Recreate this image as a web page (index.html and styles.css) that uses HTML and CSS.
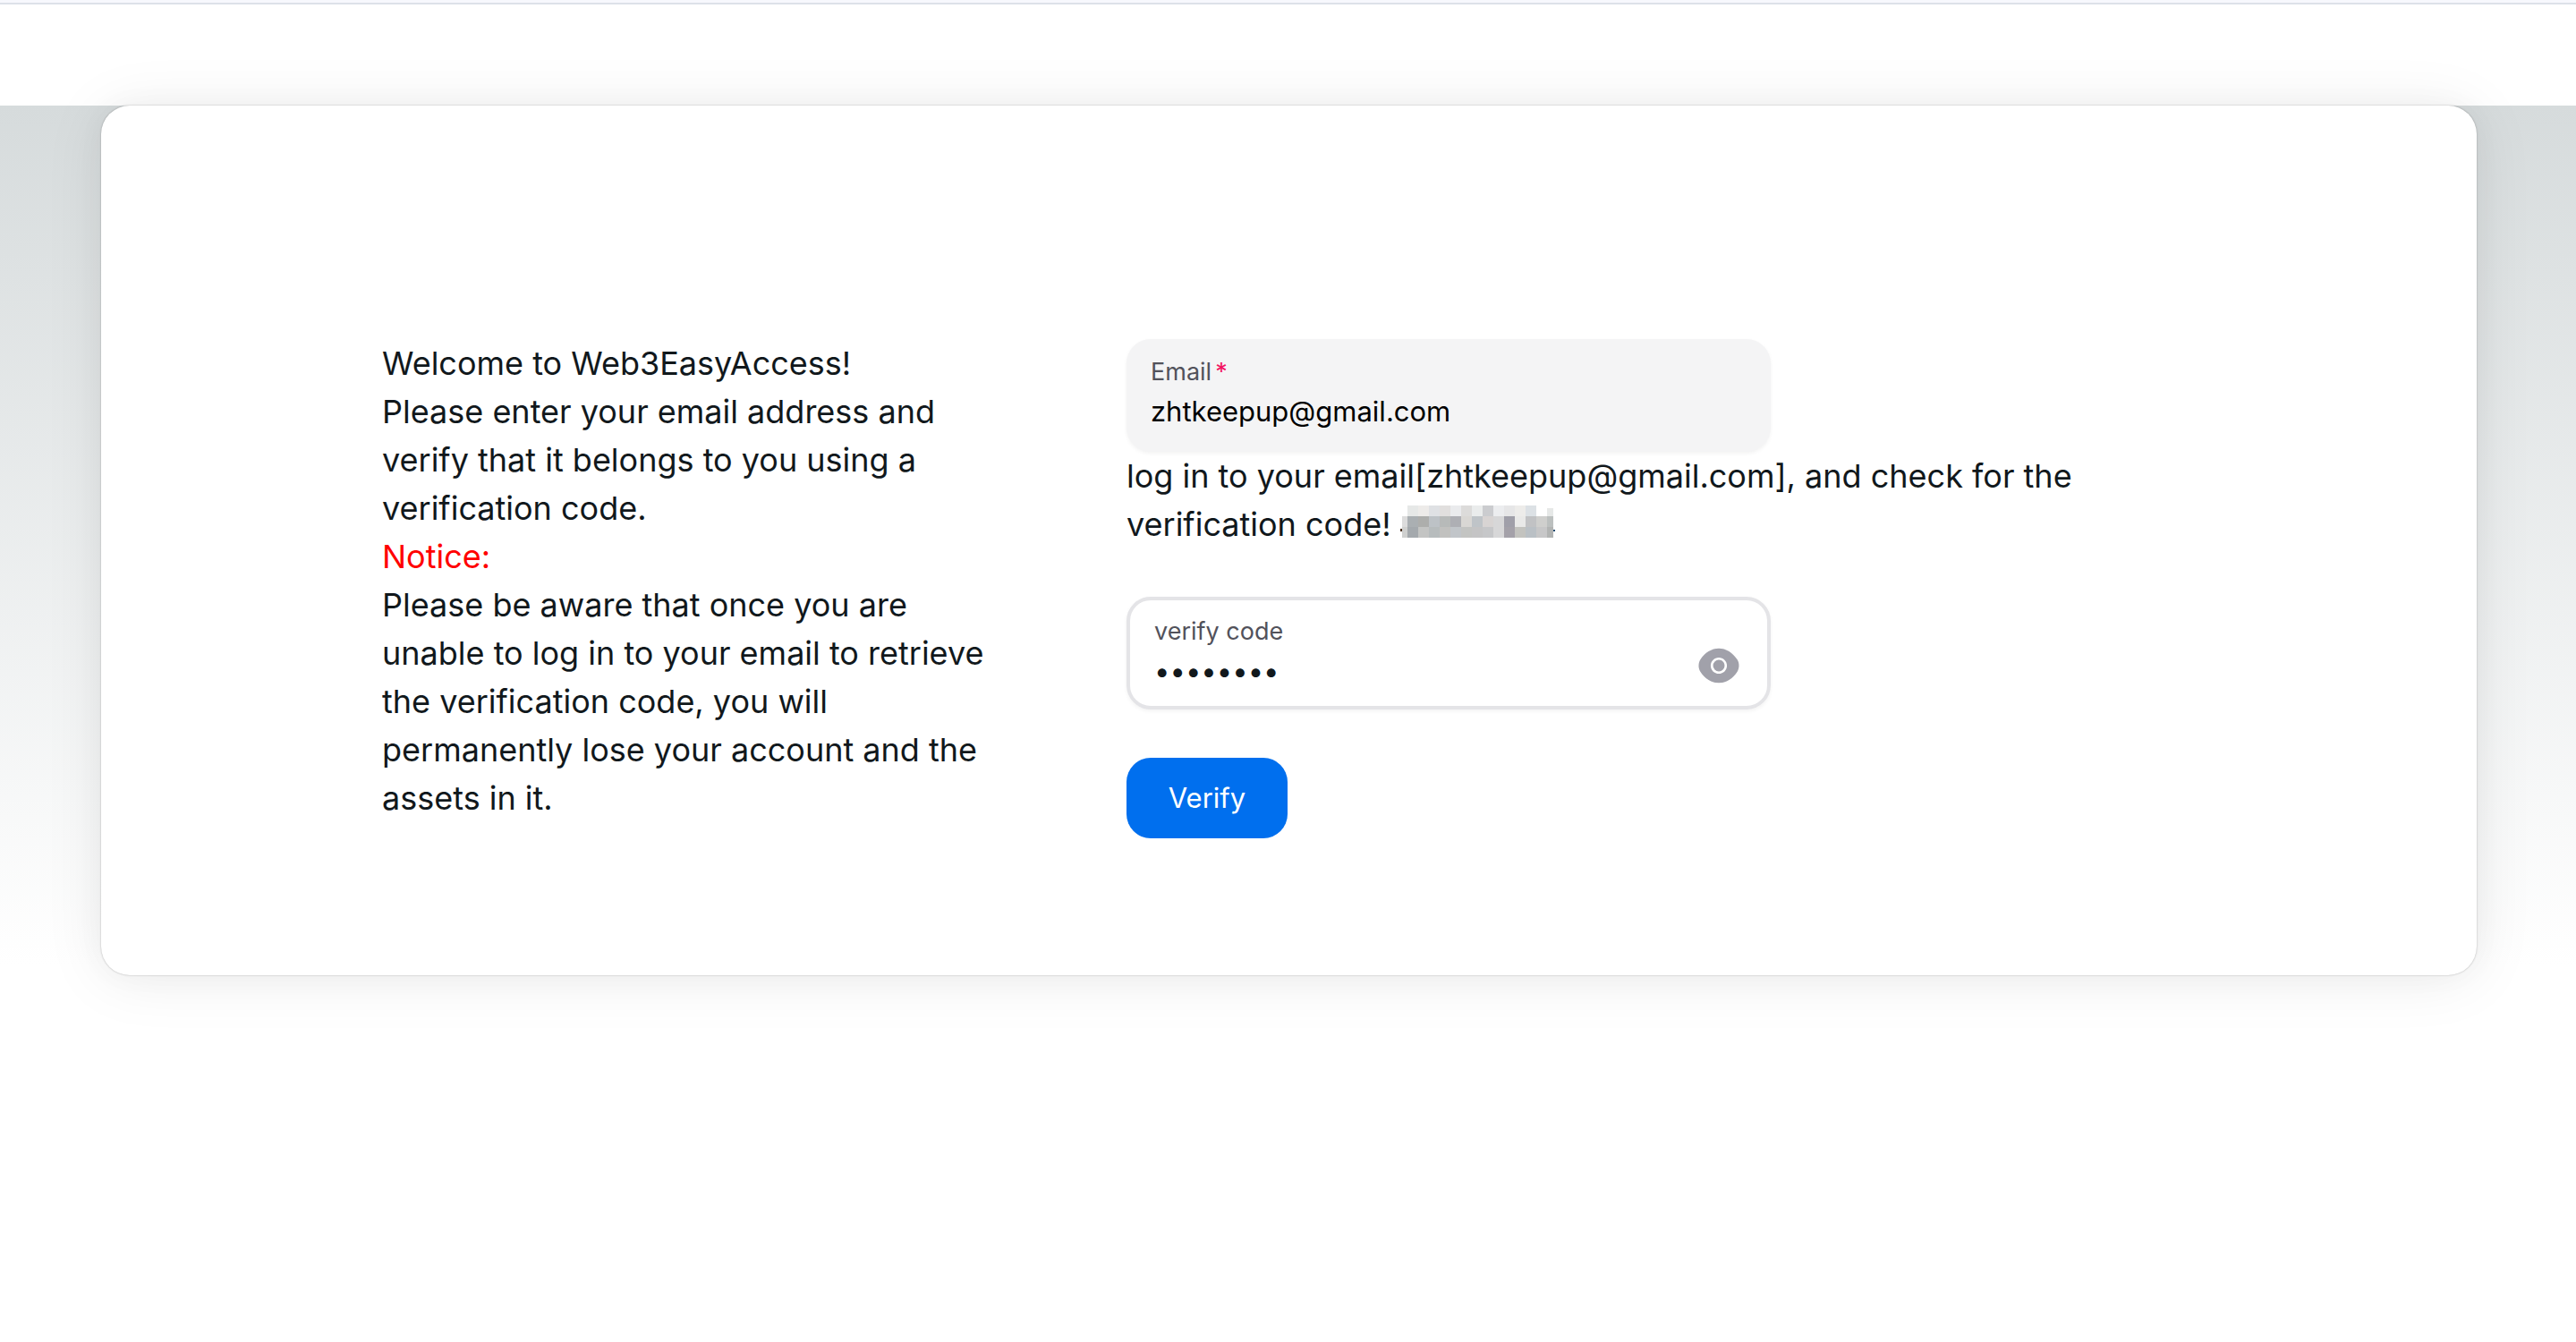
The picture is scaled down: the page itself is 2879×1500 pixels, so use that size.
FILE: index.html
```html
<!DOCTYPE html>
<html lang="en">
<head>
<meta charset="utf-8">
<meta name="viewport" content="width=device-width, initial-scale=1">
<title>Web3EasyAccess</title>
<link rel="stylesheet" href="styles.css">
</head>
<body>
<header class="topbar"></header>
<main class="page">
  <section class="card">
    <div class="intro">
      <p>Welcome to Web3EasyAccess!</p>
      <p>Please enter your email address and verify that it belongs to you using a verification code.</p>
      <p class="notice">Notice:</p>
      <p>Please be aware that once you are unable to log in to your email to retrieve the verification code, you will permanently lose your account and the assets in it.</p>
    </div>
    <form class="form">
      <div class="field field-flat">
        <div class="field-main">
          <label class="label" for="email">Email<span class="required">*</span></label>
          <input class="input input-email" id="email" type="email" value="zhtkeepup@gmail.com" required>
        </div>
      </div>
      <p class="hint">log in to your email[zhtkeepup@gmail.com], and check for the verification code!
        <svg class="masked" viewBox="0 0 173 36" role="img" aria-label="Hidden code" shape-rendering="crispEdges">
          <path fill="#4a3222" d="M0 26h2v3H0z"/><path fill="#1d4a70" d="M171 27h2v2h-2z"/>
          <path fill="#e6e8e7" d="M8 0h12v12H8z"/><path fill="#edebe9" d="M20 0h12v12H20z"/><path fill="#dfe1e4" d="M32 0h12v12H32z"/><path fill="#e1dfde" d="M44 0h12v12H44z"/><path fill="#eaebed" d="M56 0h12v12H56z"/><path fill="#dcdbda" d="M68 0h12v12H68z"/><path fill="#eaecec" d="M80 0h12v12H80z"/><path fill="#cbcccf" d="M92 0h12v12H92z"/><path fill="#ecedef" d="M104 0h12v12h-12z"/><path fill="#e6e6e7" d="M116 0h12v12h-12z"/><path fill="#edecea" d="M128 0h12v12h-12z"/><path fill="#dce1e5" d="M140 0h12v12h-12z"/><path fill="#e6e8e7" d="M164 3h7v9h-7z"/>
          <path fill="#dcdcdc" d="M2 12h6v12H2z"/><path fill="#aaafb2" d="M8 12h12v12H8z"/><path fill="#adaeac" d="M20 12h12v12H20z"/><path fill="#bdc2c6" d="M32 12h12v12H32z"/><path fill="#b7bab9" d="M44 12h12v12H44z"/><path fill="#aeafb4" d="M56 12h12v12H56z"/><path fill="#d9d7d4" d="M68 12h12v12H68z"/><path fill="#bfc4c8" d="M80 12h12v12H80z"/><path fill="#d8d4d3" d="M92 12h12v12H92z"/><path fill="#d7d7d8" d="M104 12h12v24h-12z"/><path fill="#a09fa9" d="M116 12h12v12h-12z"/><path fill="#e9e9e8" d="M128 12h12v12h-12z"/><path fill="#c1c2c4" d="M140 12h12v12h-12z"/><path fill="#cfcfcd" d="M152 12h12v12h-12z"/><path fill="#bcc0bf" d="M164 12h7v12h-7z"/>
          <path fill="#cfd0cf" d="M2 24h6v12H2z"/><path fill="#a4a9ad" d="M8 24h12v12H8z"/><path fill="#c3c4c3" d="M20 24h12v12H20z"/><path fill="#b7bcbd" d="M32 24h12v12H32z"/><path fill="#c1c1bf" d="M44 24h12v12H44z"/><path fill="#c1c5c9" d="M56 24h12v12H56z"/><path fill="#c3c4c2" d="M68 24h12v12H68z"/><path fill="#c4c4c5" d="M80 24h12v12H80z"/><path fill="#c6c7c9" d="M92 24h12v12H92z"/><path fill="#a4a1a9" d="M116 24h12v12h-12z"/><path fill="#c3c3bf" d="M128 24h12v12h-12z"/><path fill="#bac0c5" d="M140 24h12v12h-12z"/><path fill="#c7c7c8" d="M152 24h12v12h-12z"/><path fill="#b2b4b3" d="M164 24h7v12h-7z"/>
        </svg>
      </p>
      <div class="field field-bordered">
        <div class="field-main">
          <label class="label" for="code">verify code</label>
          <input class="input" id="code" type="password" value="12345678">
        </div>
        <button class="reveal" type="button" aria-label="Show code">
          <svg viewBox="0 0 24 24" fill="currentColor" aria-hidden="true">
            <path d="M21.25 9.15C18.94 5.52 15.56 3.43 12 3.43c-1.78 0-3.51.52-5.09 1.49-1.58.98-3 2.41-4.16 4.23-1 1.57-1 4.12 0 5.69 2.31 3.64 5.69 5.72 9.25 5.72 1.78 0 3.51-.52 5.09-1.49 1.58-.98 3-2.41 4.16-4.23 1-1.56 1-4.12 0-5.69ZM12 16.04c-2.24 0-4.04-1.81-4.04-4.04S9.76 7.96 12 7.96s4.04 1.81 4.04 4.04-1.8 4.04-4.04 4.04Z"/>
            <path d="M12 9.14a2.855 2.855 0 0 0 0 5.71c1.57 0 2.86-1.28 2.86-2.85S13.57 9.14 12 9.14Z"/>
          </svg>
        </button>
      </div>
      <button class="submit" type="button">Verify</button>
    </form>
  </section>
</main>
</body>
</html>
```
FILE: styles.css
```css
* {
  box-sizing: border-box;
}

body {
  margin: 0;
  background: #fff;
  color: #11181c;
  font-family: Inter, "Liberation Sans", sans-serif;
  font-size: 36px;
  font-weight: 380;
  font-optical-sizing: none;
  line-height: 54px;
}

p {
  margin: 0;
}

.topbar {
  height: 118px;
  border-top: 3px solid #f7f8fd;
  box-shadow: inset 0 2px #dde1e9;
}

.page {
  padding: 0 111px 120px 113px;
  background: linear-gradient(#d6dbdc, #fff 960px);
}

.card {
  display: grid;
  grid-template-columns: minmax(0, 700px) minmax(0, 1100px);
  column-gap: 132px;
  padding: 261px 314px 153px;
  background: #fff;
  border-radius: 32px;
  box-shadow: 0 0 34px rgb(0 0 0 / 3%), 0 4px 68px rgb(0 0 0 / 8%), 0 0 2px rgb(0 0 0 / 30%);
}

.notice {
  color: #f00;
}

.form {
  display: flex;
  flex-direction: column;
  align-items: flex-start;
}

.field {
  display: flex;
  align-items: flex-end;
  width: 100%;
  max-width: 720px;
  height: 126px;
  padding: 18px 27px;
  border-radius: 27px;
  box-shadow: 0 2px 4px rgb(0 0 0 / 5%);
}

.field-flat {
  padding-top: 20px;
  background: #f4f4f5;
}

.field-bordered {
  margin: 54px 0;
  border: 4px solid #e4e4e7;
}

.field-main {
  display: flex;
  flex: 1;
  flex-direction: column;
  align-self: flex-start;
  min-width: 0;
}

.label {
  color: #52525b;
  font-size: 27px;
  line-height: 34px;
}

.required {
  margin-left: 4px;
  color: #f31260;
}

.input {
  width: 100%;
  height: 54px;
  padding: 0;
  border: 0;
  outline: 0;
  background: none;
  color: #11181c;
  font: inherit;
  font-size: 31px;
}

.input-email {
  color: #000;
}

.masked {
  width: 173px;
  height: 36px;
  vertical-align: -2px;
}

.reveal {
  width: 54px;
  height: 54px;
  padding: 0;
  border: 0;
  background: none;
  color: #a1a1aa;
}

.reveal svg {
  display: block;
}

.submit {
  width: 180px;
  height: 90px;
  padding: 0;
  border: 0;
  border-radius: 27px;
  background: #006fee;
  color: #fff;
  font: inherit;
  font-size: 31px;
}
```
